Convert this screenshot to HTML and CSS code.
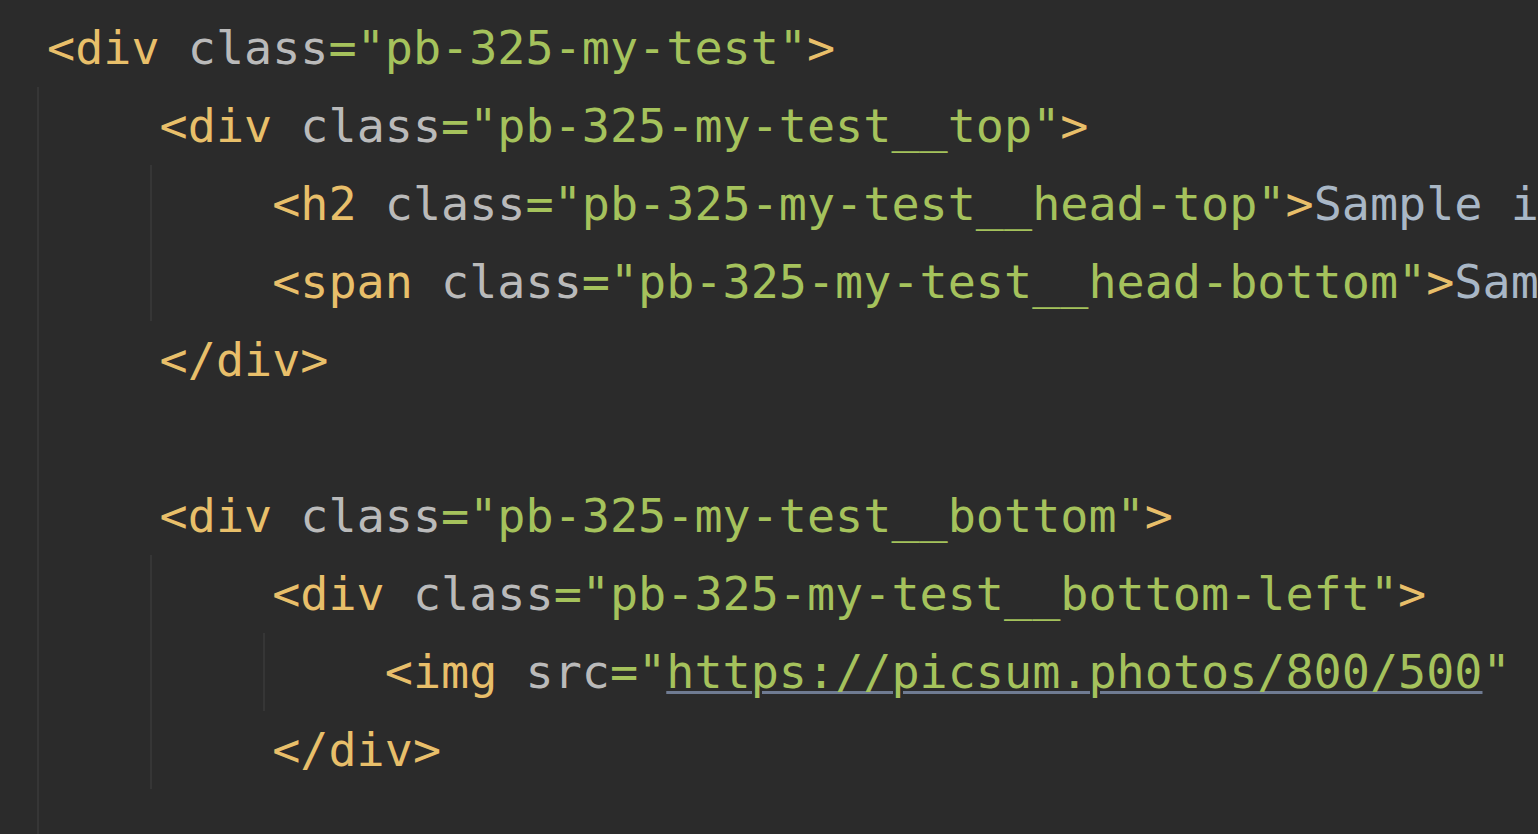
FILE: index.html
```html
<!DOCTYPE html>
<html lang="en">
<head>
<meta charset="utf-8">
<title>Editor</title>
<link rel="stylesheet" href="styles.css">
</head>
<body>
<div class="editor">
  <div class="line"><span class="t">&lt;div</span> <span class="a">class</span><span class="s">="pb-325-my-test"</span><span class="t">&gt;</span></div>
  <div class="guide g0">
    <div class="line">    <span class="t">&lt;div</span> <span class="a">class</span><span class="s">="pb-325-my-test__top"</span><span class="t">&gt;</span></div>
    <div class="guide g1">
      <div class="line">        <span class="t">&lt;h2</span> <span class="a">class</span><span class="s">="pb-325-my-test__head-top"</span><span class="t">&gt;</span><span class="x">Sample item</span><span class="t">&lt;/h2&gt;</span></div>
      <div class="line">        <span class="t">&lt;span</span> <span class="a">class</span><span class="s">="pb-325-my-test__head-bottom"</span><span class="t">&gt;</span><span class="x">Sample text</span><span class="t">&lt;/span&gt;</span></div>
    </div>
    <div class="line">    <span class="t">&lt;/div&gt;</span></div>
    <div class="line"> </div>
    <div class="line">    <span class="t">&lt;div</span> <span class="a">class</span><span class="s">="pb-325-my-test__bottom"</span><span class="t">&gt;</span></div>
    <div class="guide g1">
      <div class="line">        <span class="t">&lt;div</span> <span class="a">class</span><span class="s">="pb-325-my-test__bottom-left"</span><span class="t">&gt;</span></div>
      <div class="guide g2">
        <div class="line">            <span class="t">&lt;img</span> <span class="a">src</span><span class="s">="<span class="u">https://picsum.photos/800/500</span>"</span> <span class="a">alt</span><span class="s">=""</span><span class="t">&gt;</span></div>
      </div>
      <div class="line">        <span class="t">&lt;/div&gt;</span></div>
    </div>
    <div class="line"> </div>
  </div>
</div>
</body>
</html>
```
FILE: styles.css
```css
html, body {
  margin: 0;
  padding: 0;
  background: #2b2b2b;
  overflow: hidden;
  height: 100%;
}

.editor {
  padding: 9px 0 0 47px;
  font-family: "DejaVu Sans Mono", "Liberation Mono", monospace;
  font-size: 46.75px;
  color: #a9b7c6;
  height: 100%;
  box-sizing: border-box;
}

.line {
  height: 78px;
  line-height: 78px;
  white-space: pre;
}

.guide {
  margin-left: -10px;
  padding-left: 10px;
  background-image: linear-gradient(#363636, #363636);
  background-repeat: no-repeat;
  background-size: 2px 100%;
}

.g0 { background-position: 0 0; min-height: 760px; }
.g1 { background-position: 113px 0; }
.g2 { background-position: 226px 0; }

.t { color: #e8bf6a; }
.a { color: #bababa; }
.s { color: #a5c25c; }
.x { color: #a9b7c6; }

.u {
  text-decoration: underline;
  text-decoration-color: #6f7b92;
  text-decoration-thickness: 3px;
  text-underline-offset: 3px;
}
```
